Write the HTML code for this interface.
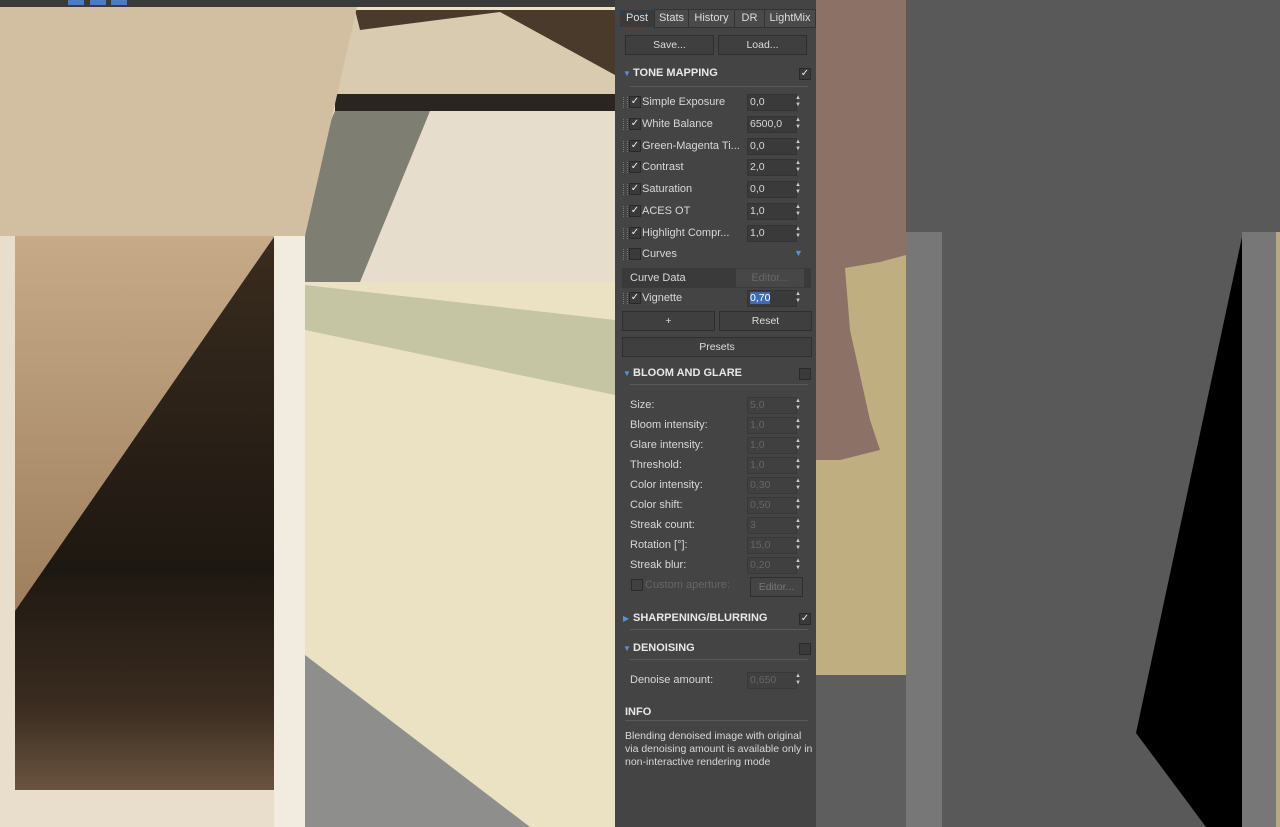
<!DOCTYPE html>
<html><head><style>
body{margin:0;width:1280px;height:827px;overflow:hidden;position:relative;font-family:"Liberation Sans",sans-serif;font-size:11px;color:#d8d8d8;background:#444}
.a{position:absolute}
#p{position:absolute;left:617px;top:0;width:199px;height:827px;background:#444}
.tab{position:absolute;top:9px;height:17px;line-height:17px;text-align:center;color:#ddd;font-size:11px;border:1px solid #333;background:#4a4a4a}
.btn{position:absolute;height:18px;line-height:18px;text-align:center;border:1px solid #2e2e2e;background:#3f3f3f;color:#ddd;font-size:10.5px}
.hd{position:absolute;left:16px;font-weight:bold;font-size:11px;color:#e8e8e8}
.tri{position:absolute;left:6px;color:#5b8fd6;font-size:8px}
.ln{position:absolute;left:13px;width:178px;height:1px;background:#5a5a5a}
.cb{position:absolute;width:10px;height:10px;border:1px solid #2a2a2a;background:#3a3a3a;color:#eee;font-size:10px;line-height:10px;text-align:center}
.row{position:absolute;left:0;width:199px;height:18px}
.row .g{position:absolute;left:6px;top:4px;width:3px;height:11px;border-left:1px dotted #777;border-right:1px dotted #777}
.row .l{position:absolute;left:25px;top:3px}
.in{position:absolute;left:130px;width:46px;height:15px;background:#3a3a3a;border:1px solid #333;line-height:15px;padding-left:2px;font-size:10.5px}
.sp{position:absolute;left:178px;width:6px;color:#ccc;font-size:6px;line-height:7px}
.dl{position:absolute;left:13px;color:#d8d8d8}
.di{position:absolute;left:130px;width:46px;height:15px;background:#404040;border:1px solid #383838;color:#666;line-height:15px;padding-left:2px;font-size:10.5px}
</style></head><body>
<svg class="a" style="left:0;top:0" width="1280" height="827">
<defs>
<linearGradient id="d" x1="0" y1="0" x2="0" y2="1"><stop offset="0" stop-color="#3a2c1e"/><stop offset=".6" stop-color="#1e1812"/><stop offset=".85" stop-color="#3a2c20"/><stop offset="1" stop-color="#6a5440"/></linearGradient>
<linearGradient id="w" x1="0" y1="0" x2="0" y2="1"><stop offset="0" stop-color="#d5c3a8"/><stop offset=".3" stop-color="#c6aa88"/><stop offset="1" stop-color="#8a6a4a"/></linearGradient>
</defs>
<rect x="305" y="0" width="310" height="827" fill="#ebe2c4"/>
<rect x="305" y="10" width="310" height="85" fill="#d8cbb0"/>
<polygon points="355,10 615,10 615,75 500,12 360,30" fill="#4a3a2c"/>
<rect x="335" y="94" width="280" height="17" fill="#2a2520"/>
<rect x="305" y="111" width="310" height="171" fill="#e6ddcc"/>
<polygon points="335,111 430,111 360,282 305,282 305,180" fill="#7e7f72"/>
<polygon points="305,285 615,320 615,395 305,330" fill="#b8bb98" opacity=".75"/>
<polygon points="305,655 530,827 305,827" fill="#8e8f8c"/>
<rect x="0" y="236" width="305" height="591" fill="#e9ddcc"/>
<rect x="15" y="7" width="259" height="783" fill="url(#w)"/>
<polygon points="0,7 357,7 305,236 0,236" fill="#d2bfa2"/>
<polygon points="15,611 274,237 274,790 15,790" fill="url(#d)"/>
<rect x="274" y="236" width="31" height="591" fill="#f2ebe0"/>
<rect x="0" y="0" width="615" height="7" fill="#3a3a3a"/>
<rect x="68" y="0" width="16" height="5" fill="#4a7cc4"/><rect x="90" y="0" width="16" height="5" fill="#4a7cc4"/><rect x="111" y="0" width="16" height="5" fill="#4a7cc4"/>
<rect x="816" y="0" width="90" height="827" fill="#bfae80"/>
<polygon points="816,0 906,0 906,255 880,262 845,268 850,330 870,420 880,450 840,460 816,460" fill="#8c7266"/>
<rect x="816" y="675" width="90" height="152" fill="#5e5e5e"/>
<rect x="906" y="0" width="374" height="827" fill="#595959"/>
<rect x="906" y="232" width="36" height="595" fill="#777"/>
<rect x="1242" y="232" width="34" height="595" fill="#777"/>
<rect x="1276" y="232" width="4" height="595" fill="#b8a880"/>
<polygon points="1242,237 1136,733 1206,827 1242,827" fill="#000"/>
</svg>
<div id="p">
<div class="tab" style="left:2px;width:34px;background:#3b3b3b;border-color:#2a4a6a">Post</div>
<div class="tab" style="left:37px;width:33px">Stats</div>
<div class="tab" style="left:71px;width:45px">History</div>
<div class="tab" style="left:117px;width:29px">DR</div>
<div class="tab" style="left:147px;width:50px">LightMix</div>
<div class="btn" style="left:8px;top:35px;width:87px">Save...</div>
<div class="btn" style="left:101px;top:35px;width:87px">Load...</div>
<div class="tri" style="top:69px">▼</div><div class="hd" style="top:67px">TONE MAPPING</div>
<div class="cb" style="left:182px;top:68px">✓</div><div class="ln" style="top:86px"></div>

<div class="row" style="top:93px"><div class="g"></div><div class="cb" style="left:12px;top:3px">✓</div><div class="l">Simple Exposure</div><div class="in" style="top:1px">0,0</div><div class="sp" style="top:2px">▲<br>▼</div></div>
<div class="row" style="top:115px"><div class="g"></div><div class="cb" style="left:12px;top:3px">✓</div><div class="l">White Balance</div><div class="in" style="top:1px">6500,0</div><div class="sp" style="top:2px">▲<br>▼</div></div>
<div class="row" style="top:137px"><div class="g"></div><div class="cb" style="left:12px;top:3px">✓</div><div class="l">Green-Magenta Ti...</div><div class="in" style="top:1px">0,0</div><div class="sp" style="top:2px">▲<br>▼</div></div>
<div class="row" style="top:158px"><div class="g"></div><div class="cb" style="left:12px;top:3px">✓</div><div class="l">Contrast</div><div class="in" style="top:1px">2,0</div><div class="sp" style="top:2px">▲<br>▼</div></div>
<div class="row" style="top:180px"><div class="g"></div><div class="cb" style="left:12px;top:3px">✓</div><div class="l">Saturation</div><div class="in" style="top:1px">0,0</div><div class="sp" style="top:2px">▲<br>▼</div></div>
<div class="row" style="top:202px"><div class="g"></div><div class="cb" style="left:12px;top:3px">✓</div><div class="l">ACES OT</div><div class="in" style="top:1px">1,0</div><div class="sp" style="top:2px">▲<br>▼</div></div>
<div class="row" style="top:224px"><div class="g"></div><div class="cb" style="left:12px;top:3px">✓</div><div class="l">Highlight Compr...</div><div class="in" style="top:1px">1,0</div><div class="sp" style="top:2px">▲<br>▼</div></div>
<div class="row" style="top:245px"><div class="g"></div><div class="cb" style="left:12px;top:3px"></div><div class="l">Curves</div><div style="position:absolute;left:177px;top:3px;color:#5b8fd6;font-size:9px">▼</div></div>
<div class="a" style="left:5px;top:268px;width:189px;height:20px;background:#3a3a3a"><span style="position:absolute;left:8px;top:4px">Curve Data</span><div style="position:absolute;left:114px;top:1px;width:68px;height:18px;background:#474747;color:#666;text-align:center;line-height:18px">Editor...</div></div>
<div class="row" style="top:289px"><div class="g"></div><div class="cb" style="left:12px;top:3px">✓</div><div class="l">Vignette</div><div class="in" style="top:1px"><span style="background:#3f6bb5;color:#fff">0,70</span></div><div class="sp" style="top:2px">▲<br>▼</div></div>
<div class="btn" style="left:5px;top:311px;width:91px">+</div>
<div class="btn" style="left:102px;top:311px;width:91px">Reset</div>
<div class="btn" style="left:5px;top:337px;width:188px">Presets</div>

<div class="tri" style="top:369px">▼</div><div class="hd" style="top:367px">BLOOM AND GLARE</div>
<div class="cb" style="left:182px;top:368px"></div><div class="ln" style="top:384px"></div>
<div class="dl" style="top:399px">Size:</div><div class="di" style="top:397px">5,0</div><div class="sp" style="top:398px">▲<br>▼</div>
<div class="dl" style="top:419px">Bloom intensity:</div><div class="di" style="top:417px">1,0</div><div class="sp" style="top:418px">▲<br>▼</div>
<div class="dl" style="top:439px">Glare intensity:</div><div class="di" style="top:437px">1,0</div><div class="sp" style="top:438px">▲<br>▼</div>
<div class="dl" style="top:459px">Threshold:</div><div class="di" style="top:457px">1,0</div><div class="sp" style="top:458px">▲<br>▼</div>
<div class="dl" style="top:479px">Color intensity:</div><div class="di" style="top:477px">0,30</div><div class="sp" style="top:478px">▲<br>▼</div>
<div class="dl" style="top:499px">Color shift:</div><div class="di" style="top:497px">0,50</div><div class="sp" style="top:498px">▲<br>▼</div>
<div class="dl" style="top:519px">Streak count:</div><div class="di" style="top:517px">3</div><div class="sp" style="top:518px">▲<br>▼</div>
<div class="dl" style="top:539px">Rotation [°]:</div><div class="di" style="top:537px">15,0</div><div class="sp" style="top:538px">▲<br>▼</div>
<div class="dl" style="top:559px">Streak blur:</div><div class="di" style="top:557px">0,20</div><div class="sp" style="top:558px">▲<br>▼</div>
<div class="cb" style="left:14px;top:579px;background:#404040"></div><div class="a" style="left:28px;top:579px;color:#666">Custom aperture:</div>
<div class="btn" style="left:133px;top:577px;width:51px;color:#777;background:#444">Editor...</div>

<div class="tri" style="top:614px">▶</div><div class="hd" style="top:612px">SHARPENING/BLURRING</div>
<div class="cb" style="left:182px;top:613px">✓</div><div class="ln" style="top:629px"></div>
<div class="tri" style="top:644px">▼</div><div class="hd" style="top:642px">DENOISING</div>
<div class="cb" style="left:182px;top:643px"></div><div class="ln" style="top:659px"></div>
<div class="dl" style="top:674px">Denoise amount:</div><div class="di" style="top:672px">0,650</div><div class="sp" style="top:673px">▲<br>▼</div>
<div class="hd" style="left:8px;top:706px">INFO</div><div class="ln" style="left:8px;top:720px;width:183px"></div>
<div class="a" style="left:8px;top:730px;width:188px;line-height:13px;font-size:10.5px">Blending denoised image with original via denoising amount is available only in non-interactive rendering mode</div>
</div>
</body></html>
